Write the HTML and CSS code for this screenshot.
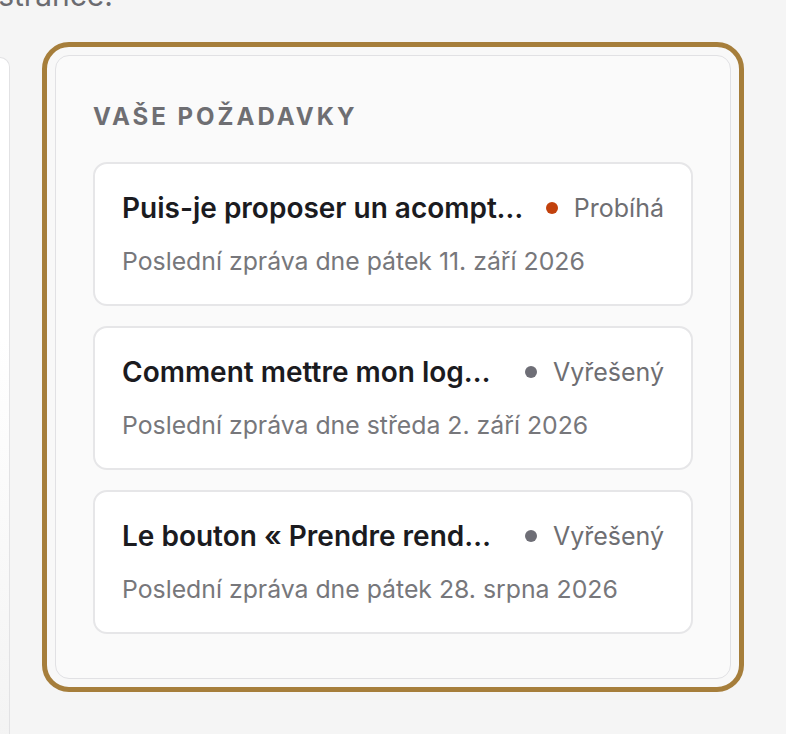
FILE: index.html
```html
<!DOCTYPE html>
<html lang="cs">
<head>
<meta charset="utf-8">
<title>Vaše požadavky</title>
<link rel="stylesheet" href="styles.css">
</head>
<body>
<div class="intro-wrap"><p class="intro">Všechny vaše požadavky najdete na této stránce.</p></div>
<div class="layout">
  <aside class="side"></aside>
  <section class="panel">
    <h2 class="panel-title">Vaše požadavky</h2>
    <ul class="list">
      <li class="item">
        <div class="item-head">
          <span class="item-title">Puis-je proposer un acompte à mes clients ?</span>
          <span class="status"><span class="dot dot-open"></span>Probíhá</span>
        </div>
        <div class="item-meta">Poslední zpráva dne pátek 11. září 2026</div>
      </li>
      <li class="item">
        <div class="item-head">
          <span class="item-title">Comment mettre mon logo sur mes factures ?</span>
          <span class="status"><span class="dot dot-done"></span>Vyřešený</span>
        </div>
        <div class="item-meta">Poslední zpráva dne středa 2. září 2026</div>
      </li>
      <li class="item">
        <div class="item-head">
          <span class="item-title">Le bouton « Prendre rendez-vous » ne fonctionne pas</span>
          <span class="status"><span class="dot dot-done"></span>Vyřešený</span>
        </div>
        <div class="item-meta">Poslední zpráva dne pátek 28. srpna 2026</div>
      </li>
    </ul>
  </section>
</div>
</body>
</html>
```
FILE: styles.css
```css
* { box-sizing: border-box; }
html, body { margin: 0; padding: 0; }
body {
  background: #f5f5f5;
  font-family: Inter, "Noto Sans", sans-serif;
  color: #1b1b1f;
  width: 786px;
  height: 734px;
  overflow: hidden;
}
.intro-wrap {
  width: 113px;
  height: 36px;
  margin-top: -23px;
  display: flex;
  justify-content: flex-end;
}
.intro {
  margin: 0;
  flex: none;
  font-size: 30px;
  line-height: 36px;
  color: #6b6b70;
  white-space: nowrap;
}
.layout {
  display: flex;
  align-items: flex-start;
  margin-top: 42px;
}
.side {
  width: 10px;
  height: 700px;
  margin-top: 2px;
  background: linear-gradient(#ffffff, #ffffff 40%, #f3f3f3);
  border: 1px solid #e2e2e4;
  border-left: none;
  border-radius: 0 20px 0 0;
}
.panel {
  margin-left: 45px;
  width: 676px;
  background: #fafafa;
  border: 1px solid #e1e1e4;
  border-radius: 14px;
  outline: 5px solid #a67e3b;
  outline-offset: 8px;
  padding: 46px 37px 44px;
  box-shadow: 0 0 0 8px #f8f8f8;
}
.panel-title {
  margin: 0 0 30px;
  font-size: 24px;
  line-height: 30px;
  font-weight: 700;
  letter-spacing: 3px;
  text-transform: uppercase;
  color: #6e6e72;
}
.list {
  list-style: none;
  margin: 0;
  padding: 0;
  display: flex;
  flex-direction: column;
  gap: 20px;
}
.item {
  background: #ffffff;
  border: 2px solid #e6e6e8;
  border-radius: 14px;
  height: 144px;
  padding: 26px 27px 0;
}
.item-head {
  display: flex;
  align-items: center;
  gap: 20px;
}
.item-title {
  flex: 1;
  min-width: 0;
  font-size: 28px;
  line-height: 36px;
  font-weight: 600;
  color: #1b1b1f;
  white-space: nowrap;
  overflow: hidden;
  text-overflow: ellipsis;
}
.status {
  flex: none;
  display: flex;
  align-items: center;
  gap: 16px;
  font-size: 25px;
  line-height: 36px;
  color: #6e6e72;
}
.dot {
  width: 12px;
  height: 12px;
  border-radius: 50%;
}
.dot-open { background: #c2410c; }
.dot-done { background: #6e6e76; }
.item-meta {
  margin-top: 19px;
  font-size: 24.8px;
  line-height: 32px;
  color: #77777b;
}
```
